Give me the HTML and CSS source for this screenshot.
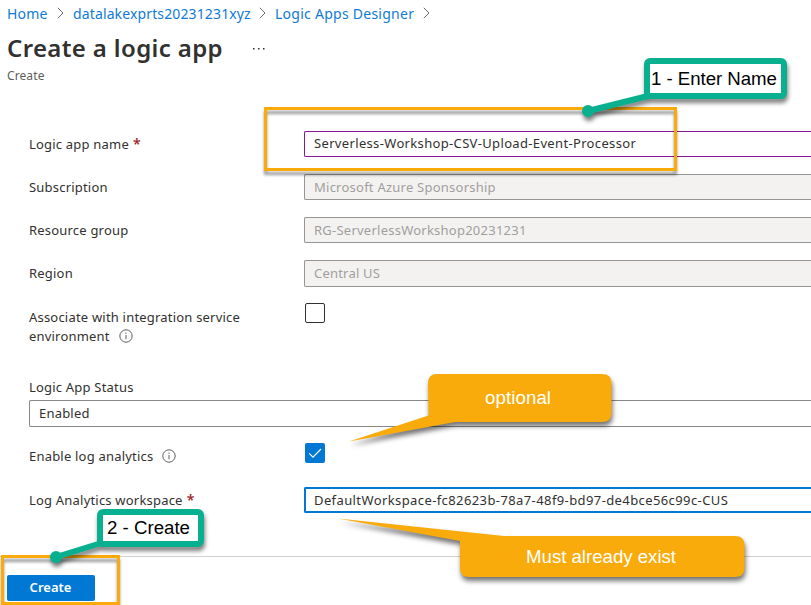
FILE: index.html
```html
<!DOCTYPE html>
<html lang="en">
<head>
<meta charset="utf-8">
<title>Create a logic app</title>
<link rel="stylesheet" href="styles.css">
</head>
<body>
<nav class="crumbs">
  <a class="c-home">Home</a>
  <svg class="chev" viewBox="0 0 7 12"><path d="M.8 .8 6 6 .8 11.2"/></svg>
  <a class="c-lake">datalakexprts20231231xyz</a>
  <svg class="chev" viewBox="0 0 7 12"><path d="M.8 .8 6 6 .8 11.2"/></svg>
  <a class="c-designer">Logic Apps Designer</a>
  <svg class="chev" viewBox="0 0 7 12"><path d="M.8 .8 6 6 .8 11.2"/></svg>
</nav>
<header class="head">
  <div class="title-row">
    <h1>Create a logic app</h1>
    <svg class="more" viewBox="0 0 12 2"><path d="M0 0h1.5v1.5H0zM5 0h1.5v1.5H5zM10 0h1.5v1.5H10z"/></svg>
  </div>
  <p class="sub">Create</p>
</header>
<main class="form">
  <div class="row"><div class="label"><span>Logic app name</span><b class="req">*</b></div><div class="field active"><span class="v-name">Serverless-Workshop-CSV-Upload-Event-Processor</span></div></div>
  <div class="row"><div class="label">Subscription</div><div class="field disabled"><span class="v-sub">Microsoft Azure Sponsorship</span></div></div>
  <div class="row"><div class="label">Resource group</div><div class="field disabled"><span class="v-rg">RG-ServerlessWorkshop20231231</span></div></div>
  <div class="row"><div class="label">Region</div><div class="field disabled tall"><span class="v-region">Central US</span></div></div>
  <div class="row assoc">
    <div class="label wrap"><div class="l-assoc">Associate with integration service</div><div class="with-info">environment
      <svg class="info" viewBox="0 0 14 14"><circle cx="7" cy="7" r="6.2"/><path d="M7 6v4.3M7 3.6v1.3"/></svg></div></div>
    <div class="check"></div>
  </div>
  <div class="status">
    <div class="label">Logic App Status</div>
    <div class="field tall">Enabled</div>
  </div>
  <div class="row analytics">
    <div class="label with-info">Enable log analytics
      <svg class="info" viewBox="0 0 14 14"><circle cx="7" cy="7" r="6.2"/><path d="M7 6v4.3M7 3.6v1.3"/></svg></div>
    <div class="check on"><svg viewBox="0 0 20 20"><path d="M4.2 10.3 8 14.1 16 6"/></svg></div>
  </div>
  <div class="row workspace"><div class="label"><span class="l-ws">Log Analytics workspace</span><b class="req">*</b></div><div class="field focus"><span class="v-ws">DefaultWorkspace-fc82623b-78a7-48f9-bd97-de4bce56c99c-CUS</span></div></div>
</main>
<footer class="foot"><button class="create">Create</button></footer>

<svg class="notes" viewBox="0 0 811 605">
  <g class="frame">
    <rect x="265.5" y="108.5" width="410" height="61"/>
    <rect x="2.5" y="556.5" width="116" height="47"/>
  </g>
  <g class="bubble">
    <path d="M437 374H602Q611.500 374 611.500 383V413Q611.500 422 602 422H455L349 441.500 428.500 415.500 428 383Q428 374 437 374Z"/>
    <path d="M504 536H735Q744.500 536 744.500 545V568Q744.500 577 735 577H469Q460 577 460 568V541L338 518.500Z"/>
  </g>
  <g class="tag">
    <path d="M588 111 650 95.500"/><circle cx="588" cy="111" r="6"/>
    <rect x="647" y="61" width="137" height="35" rx="3"/>
  </g>
  <g class="tag">
    <path d="M56 557 103 542.500"/><circle cx="56" cy="557" r="6"/>
    <rect x="100" y="512" width="101" height="32" rx="3"/>
  </g>
  <rect class="paper" x="650" y="64" width="131" height="29"/>
  <rect class="paper" x="103" y="515" width="95" height="26"/>
  <text class="ink" x="651" y="85" textLength="126">1 - Enter Name</text>
  <text class="ink" x="107" y="534" textLength="83">2 - Create</text>
  <text class="light" x="485" y="404" textLength="66">optional</text>
  <text class="light" x="526" y="563" textLength="150">Must already exist</text>
</svg>
</body>
</html>
```
FILE: styles.css
```css
* { box-sizing: border-box; }
body {
  margin: 0; width: 811px; height: 605px; overflow: hidden; position: relative;
  background: #fff; color: #323130;
  font: 13px/19px "Noto Sans", "Open Sans", sans-serif; letter-spacing: .2px;
  display: flex; flex-direction: column; white-space: nowrap;
}
.crumbs { height: 26px; padding-left: 7px; display: flex; align-items: center; color: #0f7bd7; font-size: 14px; }
.crumbs a { flex: none; }
.c-home { width: 50px; }
.c-lake { width: 186px; letter-spacing: .13px; }
.c-designer { width: 148px; letter-spacing: .26px; }
.chev { width: 7px; height: 12px; margin-right: 9px; fill: none; stroke: #6b6a69; }
.crumbs .chev { margin-top: -1px; }
.head { height: 105px; padding-left: 7px; }
.title-row { height: 44px; display: flex; align-items: center; }
h1 { margin: 0; width: 246px; font-size: 24px; line-height: 32px; font-weight: 600; letter-spacing: .36px; }
.more { width: 12px; height: 2px; margin-top: 2px; fill: #323130; }
.sub { margin: -2px 0 0; font-size: 12px; line-height: 16px; color: #605e5c; letter-spacing: .1px; }
.form { padding-left: 29px; }
.row { height: 43px; display: grid; grid-template-columns: 275px 1fr; align-items: start; }
.label { padding-top: 4px; }
.req { color: #a4262c; font-weight: 600; font-size: 14px; margin-left: 4px; line-height: 1; }
.field { height: 26px; padding-left: 9px; border: 1px solid #8a8886; border-right: 0; border-radius: 2px 0 0 2px; line-height: 23px; background: #fff; }
.tall { height: 27px; line-height: 25px; }
.active { border-color: #881798; }
.disabled { background: #f3f2f1; color: #a19f9d; border-color: #979593; line-height: 25px; }
.focus { border: 2px solid #0078d4; border-right: 0; padding-left: 8px; line-height: 23px; }
.v-name { letter-spacing: .34px; }
.v-sub, .v-rg { letter-spacing: .24px; }
.v-ws { letter-spacing: .4px; }
.check { width: 20px; height: 20px; margin-left: 1px; border: 1px solid #323130; border-radius: 2px; }
.check.on { background: #0078d4; border: 0; }
.check svg { display: block; fill: none; stroke: #fff; stroke-width: 1.1; }
.assoc { height: 74px; }
.assoc .wrap { padding-top: 5px; }
.with-info { display: flex; align-items: center; gap: 9px; }
.info { width: 14px; height: 14px; margin-top: -2px; fill: none; stroke: #605e5c; stroke-width: 1; }
.status { height: 66px; }
.status .label { padding-top: 1px; height: 23px; }
.assoc .check { margin-top: 0; }
.analytics { height: 44px; }
.foot { height: 49px; margin-top: auto; padding: 18px 0 0 7px; border-top: 1px solid #d2d0ce; }
.create { width: 88px; height: 26px; display: block; border: 0; border-radius: 2px; padding: 0 1px 2px 0; background: #0078d4; color: #fff; font: 600 13px/24px "Noto Sans", "Open Sans", sans-serif; }
/* Annotations drawn over the form */
.notes { position: absolute; left: 0; top: 0; width: 811px; height: 605px; font: 18.67px "Liberation Sans", sans-serif; letter-spacing: 0; }
.frame { fill: none; stroke: #faab0a; stroke-width: 3; filter: drop-shadow(0 4px 1.500px rgba(0,0,0,.4)); }
.bubble { fill: #f9ab0b; filter: drop-shadow(1px 4px 2.500px rgba(0,0,0,.55)); }
.tag { fill: none; stroke: #09b08f; stroke-width: 6; filter: drop-shadow(1px 4px 2px rgba(0,0,0,.5)); }
.tag circle { fill: #09b08f; stroke: none; }
.paper { fill: #fff; }
.ink { fill: #000; }
.light { fill: #fff; }
```
